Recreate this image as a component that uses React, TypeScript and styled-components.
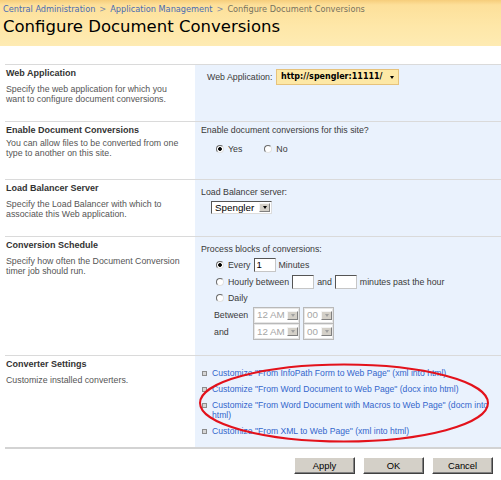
import React from 'react';
import styled, { createGlobalStyle } from 'styled-components';

const Global = createGlobalStyle`
  html, body { margin: 0; padding: 0; background: #fff; }
  body {
    font-family: "Liberation Sans", Arial, sans-serif;
    font-size: 8.8px;
    color: #000;
  }
`;

const Page = styled.div`
  position: relative;
  width: 501px;
  height: 480px;
  overflow: hidden;
  background: #fff;
`;

const Header = styled.header`
  height: 46px;
  box-sizing: border-box;
  padding: 4px 0 0 3px;
  background: linear-gradient(to bottom, #f6cd7b 0px, #fde09a 5px, #fee7a8 26px, #feebb3 100%);
`;

const Crumbs = styled.div`
  font-family: "DejaVu Sans", Verdana, sans-serif;
  font-size: 8.2px;
  line-height: 11px;
  white-space: nowrap;
`;

const CrumbLink = styled.a`
  color: #4a6cb3;
  text-decoration: none;
`;

const CrumbSep = styled.span`
  color: #7d89a3;
  margin: 0 4px;
`;

const CrumbCurrent = styled.span`
  color: #77725f;
`;

const Title = styled.h1`
  margin: 2px 0 0;
  font-family: "DejaVu Sans", Verdana, sans-serif;
  font-weight: normal;
  font-size: 16.5px;
  line-height: 20px;
  color: #000;
  white-space: nowrap;
`;

const Sections = styled.div`
  margin: 18px 0 0 5px;
  border-bottom: 2px solid #d3d3d3;
`;

const Section = styled.section<{ $h: number }>`
  display: grid;
  grid-template-columns: 190px 1fr;
  height: ${(p) => p.$h}px;
  box-sizing: border-box;
  border-top: 1px solid #dadada;
`;

const Info = styled.div`
  padding: 3px 12px 0 1px;
`;

const InfoTitle = styled.h3`
  margin: 0;
  font-size: 9px;
  line-height: 11px;
  font-weight: bold;
  color: #333;
`;

const InfoText = styled.p<{ $gap?: number }>`
  margin: ${(p) => p.$gap ?? 5}px 0 0;
  line-height: 10px;
  color: #555;
`;

const Controls = styled.div<{ $pt: number }>`
  background: #eaf2fd;
  padding: ${(p) => p.$pt}px 4px 0 6px;
  color: #3a3a3a;
  line-height: 10px;
`;

const FieldRow = styled.div`
  display: flex;
  align-items: center;
  padding-left: 6px;
`;

const FieldLabel = styled.span`
  width: 69px;
  flex: none;
`;

const WebAppPicker = styled.div`
  display: flex;
  align-items: center;
  justify-content: space-between;
  width: 123px;
  height: 16px;
  box-sizing: border-box;
  padding: 0 4px 0 4px;
  border: 1px solid #e6c27c;
  background: #fde8a6;
  font-family: "DejaVu Sans", Verdana, sans-serif;
  font-weight: bold;
  font-size: 8px;
  color: #000;
`;

const Caret = styled.span<{ $color?: string }>`
  width: 0;
  height: 0;
  border-left: 2.5px solid transparent;
  border-right: 2.5px solid transparent;
  border-top: 3px solid ${(p) => p.$color ?? '#000'};
`;

const RadioGroup = styled.div`
  display: flex;
  align-items: center;
  gap: 22px;
  height: 12px;
  margin-top: 8px;
  padding-left: 15px;
`;

const Choice = styled.span`
  display: inline-flex;
  align-items: center;
  gap: 4px;
  flex: none;
`;

const RadioDot = styled.span<{ $on?: boolean }>`
  display: inline-block;
  flex: none;
  width: 8px;
  height: 8px;
  box-sizing: border-box;
  border-radius: 50%;
  border: 1px solid;
  border-color: #6a6a6a #e2e2e2 #e2e2e2 #6a6a6a;
  background: ${(p) =>
    p.$on ? 'radial-gradient(circle, #000 0 1.5px, #fff 2.2px)' : '#fff'};
`;

const SelectWrap = styled.div`
  margin-top: 4px;
  padding-left: 10px;
`;

const Select = styled.div<{ $w: number; $h: number; $disabled?: boolean }>`
  display: flex;
  align-items: center;
  justify-content: space-between;
  width: ${(p) => p.$w}px;
  height: ${(p) => p.$h}px;
  box-sizing: border-box;
  padding: 0 1px 0 3px;
  border: 1px solid;
  border-color: ${(p) =>
    p.$disabled ? '#b9b9b9' : '#555 #dcdcdc #dcdcdc #555'};
  box-shadow: ${(p) => (p.$disabled ? 'inset 0 0 0 1px #e6e6e6' : 'none')};
  background: #fff;
  font-size: 9.8px;
  color: ${(p) => (p.$disabled ? '#a6a6a6' : '#000')};
  flex: none;
`;

const SelectButton = styled.span<{ $disabled?: boolean }>`
  display: flex;
  align-items: center;
  justify-content: center;
  width: 11px;
  height: 9px;
  box-sizing: border-box;
  background: #d4d0c8;
  border: 1px solid;
  border-color: #f4f4f4 #808080 #808080 #f4f4f4;
`;

const Schedule = styled.div`
  margin-top: 3px;
`;

const ScheduleRow = styled.div`
  display: flex;
  align-items: center;
  gap: 3px;
  height: 16.6px;
  padding-left: 15px;
  white-space: nowrap;
`;

const TextBox = styled.div<{ $w: number }>`
  display: flex;
  align-items: center;
  width: ${(p) => p.$w}px;
  height: 14px;
  box-sizing: border-box;
  padding-left: 2px;
  border: 1px solid;
  border-color: #555 #c6c6c6 #c6c6c6 #555;
  background: #fff;
  font-size: 9.6px;
  color: #000;
  flex: none;
`;

const TimeRow = styled.div`
  display: grid;
  grid-template-columns: 36px auto auto;
  justify-content: start;
  align-items: center;
  column-gap: 3px;
  height: 16.6px;
  padding-left: 13px;
`;

const LinkList = styled.ul`
  list-style: none;
  margin: 0;
  padding: 0 0 0 1px;
  display: flex;
  flex-direction: column;
  gap: 6px;
`;

const LinkItem = styled.li`
  display: flex;
  align-items: flex-start;
  gap: 5px;
  font-size: 8.6px;
  line-height: 10px;
`;

const Bullet = styled.span`
  flex: none;
  width: 5px;
  height: 5px;
  margin-top: 2.5px;
  box-sizing: border-box;
  border: 1px solid #8c8c8c;
  background: #d6d6d6;
`;

const Link = styled.a`
  color: #3366cc;
  text-decoration: none;
`;

const ButtonBar = styled.div`
  display: flex;
  justify-content: flex-end;
  gap: 8px;
  padding: 8px 8px 0 0;
`;

const Button = styled.button`
  width: 61px;
  height: 17px;
  box-sizing: border-box;
  padding: 0;
  font-family: "Liberation Sans", Arial, sans-serif;
  font-size: 9.4px;
  color: #000;
  background: #d4d0c8;
  border: 1px solid;
  border-color: #fff #404040 #404040 #fff;
  box-shadow: inset -1px -1px 0 #808080;
`;

const Highlight = styled.svg`
  position: absolute;
  left: 0;
  top: 0;
  pointer-events: none;
`;

const links = [
  'Customize "From InfoPath Form to Web Page" (xml into html)',
  'Customize "From Word Document to Web Page" (docx into html)',
  'Customize "From Word Document with Macros to Web Page" (docm into html)',
  'Customize "From XML to Web Page" (xml into html)',
];

function TimeSelects({ label }: { label: string }) {
  return (
    <TimeRow>
      <span>{label}</span>
      <Select $w={47} $h={17} $disabled>
        12 AM
        <SelectButton $disabled>
          <Caret $color="#a0a0a0" />
        </SelectButton>
      </Select>
      <Select $w={31} $h={17} $disabled>
        00
        <SelectButton $disabled>
          <Caret $color="#a0a0a0" />
        </SelectButton>
      </Select>
    </TimeRow>
  );
}

export default function App() {
  return (
    <>
      <Global />
      <Page>
        <Header>
          <Crumbs>
            <CrumbLink href="#">Central Administration</CrumbLink>
            <CrumbSep>&gt;</CrumbSep>
            <CrumbLink href="#">Application Management</CrumbLink>
            <CrumbSep>&gt;</CrumbSep>
            <CrumbCurrent>Configure Document Conversions</CrumbCurrent>
          </Crumbs>
          <Title>Configure Document Conversions</Title>
        </Header>

        <Sections>
          <Section $h={57}>
            <Info>
              <InfoTitle>Web Application</InfoTitle>
              <InfoText>
                Specify the web application for which you want to configure document conversions.
              </InfoText>
            </Info>
            <Controls $pt={4}>
              <FieldRow>
                <FieldLabel>Web Application:</FieldLabel>
                <WebAppPicker>
                  http://spengler:11111/
                  <Caret />
                </WebAppPicker>
              </FieldRow>
            </Controls>
          </Section>

          <Section $h={58}>
            <Info>
              <InfoTitle>Enable Document Conversions</InfoTitle>
              <InfoText $gap={2}>
                You can allow files to be converted from one type to another on this site.
              </InfoText>
            </Info>
            <Controls $pt={3}>
              <div>Enable document conversions for this site?</div>
              <RadioGroup>
                <Choice>
                  <RadioDot $on />
                  Yes
                </Choice>
                <Choice>
                  <RadioDot />
                  No
                </Choice>
              </RadioGroup>
            </Controls>
          </Section>

          <Section $h={57}>
            <Info>
              <InfoTitle>Load Balancer Server</InfoTitle>
              <InfoText>Specify the Load Balancer with which to associate this Web application.</InfoText>
            </Info>
            <Controls $pt={7}>
              <div>Load Balancer server:</div>
              <SelectWrap>
                <Select $w={61} $h={13}>
                  Spengler
                  <SelectButton>
                    <Caret />
                  </SelectButton>
                </Select>
              </SelectWrap>
            </Controls>
          </Section>

          <Section $h={119}>
            <Info>
              <InfoTitle>Conversion Schedule</InfoTitle>
              <InfoText>Specify how often the Document Conversion timer job should run.</InfoText>
            </Info>
            <Controls $pt={7}>
              <div>Process blocks of conversions:</div>
              <Schedule>
                <ScheduleRow>
                  <Choice>
                    <RadioDot $on />
                    Every
                  </Choice>
                  <TextBox $w={22}>1</TextBox>
                  <span>Minutes</span>
                </ScheduleRow>
                <ScheduleRow>
                  <Choice>
                    <RadioDot />
                    Hourly between
                  </Choice>
                  <TextBox $w={22} />
                  <span>and</span>
                  <TextBox $w={22} />
                  <span>minutes past the hour</span>
                </ScheduleRow>
                <ScheduleRow>
                  <Choice>
                    <RadioDot />
                    Daily
                  </Choice>
                </ScheduleRow>
                <TimeSelects label="Between" />
                <TimeSelects label="and" />
              </Schedule>
            </Controls>
          </Section>

          <Section $h={92}>
            <Info>
              <InfoTitle>Converter Settings</InfoTitle>
              <InfoText>Customize installed converters.</InfoText>
            </Info>
            <Controls $pt={12}>
              <LinkList>
                {links.map((t) => (
                  <LinkItem key={t}>
                    <Bullet />
                    <Link href="#">{t}</Link>
                  </LinkItem>
                ))}
              </LinkList>
            </Controls>
          </Section>
        </Sections>

        <ButtonBar>
          <Button>Apply</Button>
          <Button>OK</Button>
          <Button>Cancel</Button>
        </ButtonBar>

        <Highlight width="501" height="480" viewBox="0 0 501 480">
          <ellipse
            cx="344"
            cy="403"
            rx="144"
            ry="38.5"
            fill="none"
            stroke="#e3121b"
            strokeWidth="2"
          />
        </Highlight>
      </Page>
    </>
  );
}
